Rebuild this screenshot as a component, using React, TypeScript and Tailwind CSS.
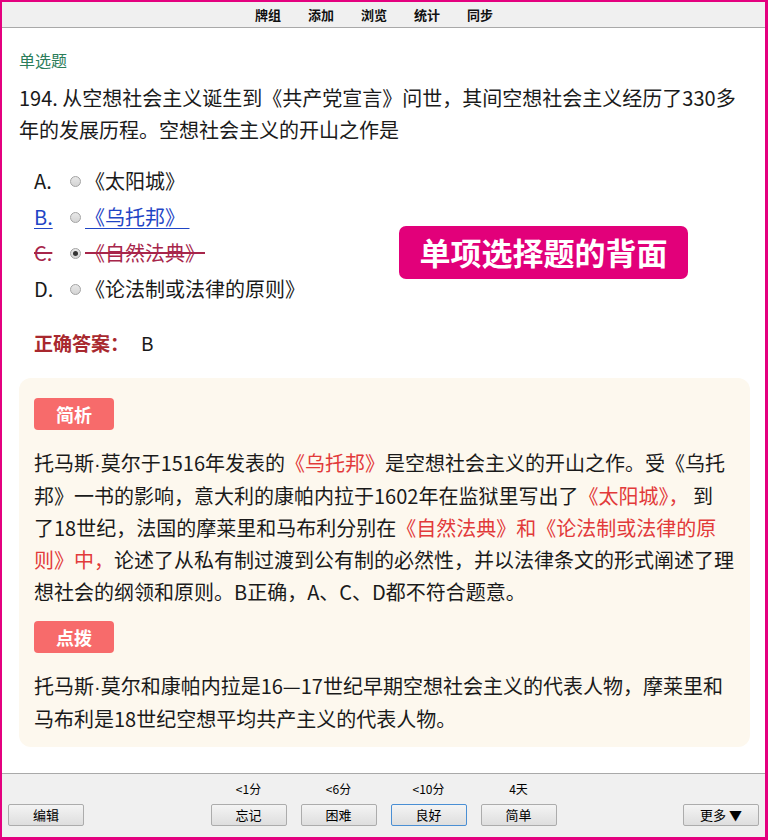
import React from "react";

const font = "font-['Noto_Sans_CJK_SC','Microsoft_YaHei',sans-serif]";

function Radio({ checked = false }: { checked?: boolean }) {
  return (
    <span className="flex h-[11px] w-[11px] shrink-0 items-center justify-center rounded-full border border-[#a3a3a3] bg-gradient-to-b from-[#e8e8e8] to-[#d4d4d4]">
      {checked && <span className="h-[5px] w-[5px] rounded-full bg-[#333]" />}
    </span>
  );
}

function Tag({ label }: { label: string }) {
  return (
    <div className="flex h-[32px] w-[80px] items-center justify-center rounded-[4px] bg-[#f76b6b] text-[18px] font-bold text-white">
      {label}
    </div>
  );
}

function WinButton({ label, focused = false }: { label: string; focused?: boolean }) {
  return (
    <button
      className={
        "flex h-[22px] w-[76px] items-center justify-center rounded-[2px] border bg-gradient-to-b from-[#f4f4f4] to-[#dedede] text-[13px] text-black " +
        (focused ? "border-[#4a8fd4]" : "border-[#acacac]")
      }
    >
      {label}
    </button>
  );
}

const red = "text-[#e23a3a]";

// narrow latin middle dot, as in the reference
const Dot = () => <span className="font-['Liberation_Sans',sans-serif]">·</span>;

export default function App() {
  const options = [
    { letter: "A.", text: "《太阳城》", style: "", checked: false },
    { letter: "B.", text: "《乌托邦》 ", style: "text-[#1f45c5] underline decoration-1 underline-offset-[3px]", checked: false },
    { letter: "C.", text: "《自然法典》", style: "text-[#a7254a] line-through decoration-[1.5px]", checked: true },
    { letter: "D.", text: "《论法制或法律的原则》", style: "", checked: false },
  ];
  const nav = ["牌组", "添加", "浏览", "统计", "同步"];
  const answers = [
    { tip: "<1分", label: "忘记" },
    { tip: "<6分", label: "困难" },
    { tip: "<10分", label: "良好", focused: true },
    { tip: "4天", label: "简单" },
  ];

  return (
    <div className={`${font} flex h-[840px] w-[768px] flex-col border-b-[3px] border-l-2 border-r-[3px] border-t-2 border-[#e4007f] bg-white`}>
      {/* top menu */}
      <div className="flex h-[26px] shrink-0 items-center gap-[27px] border-b border-[#a9a9a9] bg-[#f0f0f0] pl-[253px] text-[13px] font-bold text-[#111]">
        {nav.map((n) => (
          <span key={n}>{n}</span>
        ))}
      </div>

      {/* card body */}
      <div className="relative flex-1 px-[17px] pt-[21px]">
        <div className="text-[16px] leading-[22px] text-[#2b7d5a]">单选题</div>
        <p className="mt-[11px] w-[728px] text-[20px] leading-[32px] text-[#1a1a1a]">
          194. 从空想社会主义诞生到《共产党宣言》问世，其间空想社会主义经历了330多年的发展历程。空想社会主义的开山之作是
        </p>

        <div className="mt-[17px] pl-[15px]">
          {options.map((o) => (
            <div key={o.letter} className="flex h-[36px] items-center text-[20px] text-[#1a1a1a]">
              <span className={`w-[36px] ${o.style}`}>
                <span>{o.letter}</span>
              </span>
              <Radio checked={o.checked} />
              <span className={`ml-[4px] whitespace-pre ${o.style}`}>{o.text}</span>
            </div>
          ))}
        </div>

        <div className="mt-[20px] flex pl-[15px] text-[19px] leading-[32px]">
          <span className="font-bold text-[#a8282e]">正确答案：</span>
          <span className="ml-[12px] text-[#1a1a1a]">B</span>
        </div>

        <div className="mt-[19px] w-[731px] rounded-[12px] bg-[#fdf8ee] pb-[12px] pl-[15px] pr-[12px] pt-[20px] text-[20px] leading-[32px] text-[#1a1a1a]">
          <Tag label="简析" />
          <p className="mt-[17px]">
            托马斯<Dot />莫尔于1516年发表的<span className={red}>《乌托邦》</span>是空想社会主义的开山之作。受《乌托<br />邦》一书的影响，意大利的康帕内拉于1602年在监狱里写出了
            <span className={red}>《太阳城》，</span> 到<br />了18世纪，法国的摩莱里和马布利分别在
            <span className={red}>《自然法典》和《论法制或法律的原<br />则》中，</span>
            论述了从私有制过渡到公有制的必然性，并以法律条文的形式阐述了理<br />想社会的纲领和原则。B正确，A、C、D都不符合题意。
          </p>
          <div className="mt-[13px]">
            <Tag label="点拨" />
          </div>
          <p className="mt-[17px]">
            托马斯<Dot />莫尔和康帕内拉是16—17世纪早期空想社会主义的代表人物，摩莱里和<br />马布利是18世纪空想平均共产主义的代表人物。
          </p>
        </div>

        {/* annotation */}
        <div className="absolute left-[397px] top-[198px] flex h-[53px] w-[289px] items-center justify-center rounded-[7px] bg-[#e2007a] text-[31px] font-bold text-white">
          单项选择题的背面
        </div>
      </div>

      {/* bottom answer bar */}
      <div className="flex h-[64px] shrink-0 items-end justify-between border-t border-[#a9a9a9] bg-[#f0f0f0] px-[6px] pb-[11px]">
        <WinButton label="编辑" />
        <div className="flex gap-[14px]">
          {answers.map((a) => (
            <div key={a.label} className="flex flex-col items-center">
              <span className="mb-[7px] text-[12px] leading-[16px] text-black">{a.tip}</span>
              <WinButton label={a.label} focused={a.focused} />
            </div>
          ))}
        </div>
        <WinButton label="更多 ▼" />
      </div>
    </div>
  );
}
